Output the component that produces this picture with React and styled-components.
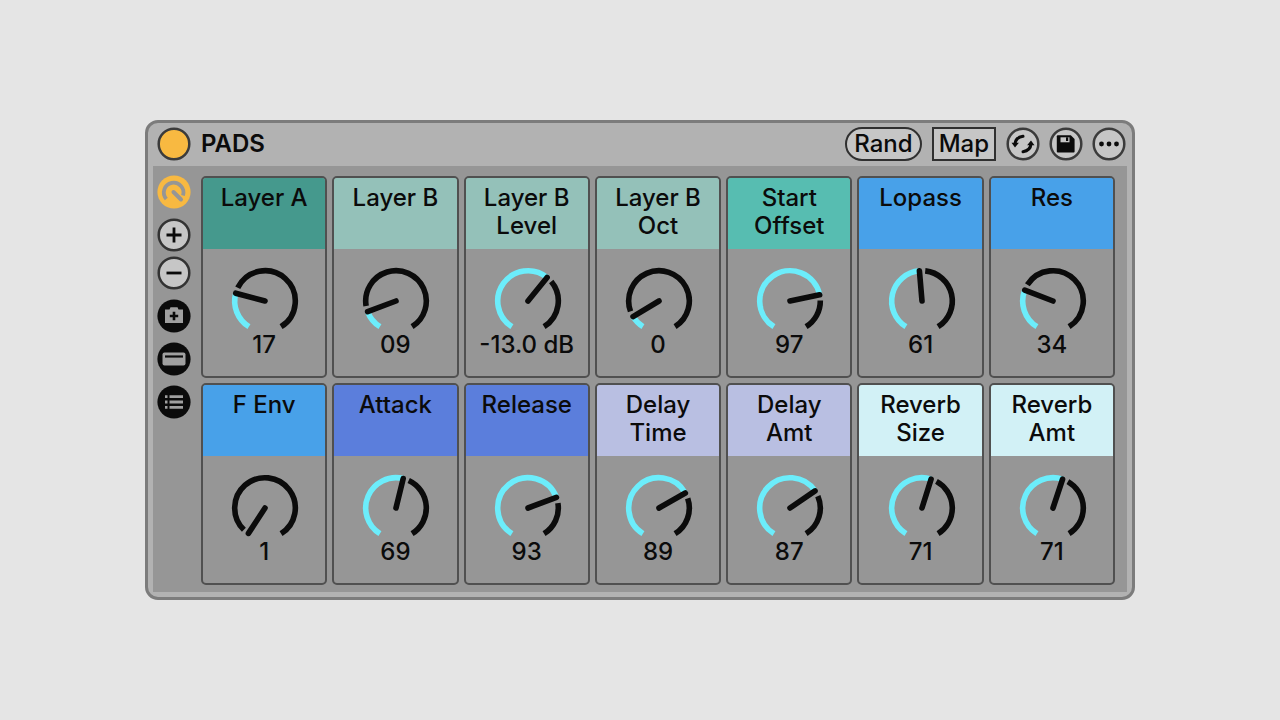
import React, { useState } from "react";
import styled, { createGlobalStyle } from "styled-components";

const GlobalStyle = createGlobalStyle`
    * {
        box-sizing: border-box;
    }

    body {
        margin: 0;
        background-color: #e5e5e5;
        color: #0b0b0b;
        font-family: Inter, "Liberation Sans", sans-serif;
    }
`

const Page = styled.main`
    min-height: 100vh;
    display: flex;
    flex-direction: column;
    align-items: center;
    justify-content: center;
`

const Rack = styled.section`
    width: calc(100% - 290px);
    border: 3px solid #7c7c7c;
    border-radius: 13px;
    background-color: #b2b2b2;
    padding: 0 5px 5px;
`

const Header = styled.header`
    display: flex;
    align-items: center;
    gap: 10px;
    height: 43px;
    padding: 0 1px 1px 4px;
`

const Name = styled.h1`
    flex: 1;
    margin: 0;
    font-size: 24px;
    line-height: 28px;
    font-weight: 600;
`

const TextButton = styled.button`
    height: 34px;
    padding: 0 ${props => props.$round ? "7px" : "5px"};
    border: 2px solid #303030;
    border-radius: ${props => props.$round ? "17px" : "0"};
    background-color: #c6c6c6;
    color: #0b0b0b;
    font: 500 24px/28px Inter, "Liberation Sans", sans-serif;
    cursor: pointer;
`

const IconGroup = styled.div`
    display: flex;
    gap: 9px;
`

const IconButton = styled.button`
    display: flex;
    width: 34px;
    height: 34px;
    padding: 0;
    border: 0;
    border-radius: 50%;
    background: none;
    cursor: pointer;
`

const Body = styled.div`
    display: flex;
    gap: 10px;
    padding: 9px 12px 7px 4px;
    background-color: #969696;
`

const Side = styled.nav`
    display: flex;
    flex-direction: column;
    gap: 9px;
`

const Pair = styled.div`
    display: flex;
    flex-direction: column;
    gap: 4px;
`

const Grid = styled.div`
    flex: 1;
    display: grid;
    grid-template-columns: repeat(7, 1fr);
    gap: 5px;
    padding-top: 1px;
`

const Cell = styled.div`
    display: flex;
    flex-direction: column;
    align-items: center;
    height: 202px;
    border: 2px solid #505050;
    border-radius: 5px;
    overflow: hidden;
`

const Title = styled.label`
    width: 100%;
    height: 71px;
    padding: 6px 16px 0;
    background-color: ${props => props.$color};
    font-size: 24px;
    line-height: 28px;
    font-weight: 500;
    text-align: center;
`

const Dial = styled.div`
    position: relative;
    width: 68px;
    height: 68px;
    margin-top: 18px;
`

const DialInput = styled.input`
    position: absolute;
    inset: 0;
    width: 100%;
    height: 100%;
    margin: 0;
    opacity: 0;
    cursor: pointer;
`

const Value = styled.output`
    margin-top: -4px;
    font-size: 24px;
    line-height: 28px;
    font-weight: 500;
    white-space: nowrap;
`

const midi = { min: 0, max: 127 };
const layer = { min: 0, max: 69, format: v => String(Math.round(v)).padStart(2, "0") };
const level = { min: -36, max: 0.4, format: v => v.toFixed(1) + " dB" };
const octave = { min: -1, max: 10 };

const macros = [
    { name: "Layer A", color: "#45998d", value: 17, ...layer },
    { name: "Layer B", color: "#94c1b9", value: 8.7, ...layer },
    { name: "Layer B Level", color: "#94c1b9", value: -13, ...level },
    { name: "Layer B Oct", color: "#94c1b9", value: 0, ...octave },
    { name: "Start Offset", color: "#57bdb1", value: 97, ...midi },
    { name: "Lopass", color: "#48a1e9", value: 61.4, ...midi },
    { name: "Res", color: "#48a1e9", value: 34, ...midi },
    { name: "F Env", color: "#48a1e9", value: 0.5, ...midi },
    { name: "Attack", color: "#5b7edc", value: 69.4, ...midi },
    { name: "Release", color: "#5b7edc", value: 93.4, ...midi },
    { name: "Delay Time", color: "#b9bfe2", value: 89.4, ...midi },
    { name: "Delay Amt", color: "#b9bfe2", value: 87.4, ...midi },
    { name: "Reverb Size", color: "#d2f1f6", value: 71, ...midi },
    { name: "Reverb Amt", color: "#d2f1f6", value: 71.4, ...midi },
];

const SWEEP = 148;

// angles are in degrees, clockwise from 12 o'clock
const point = (angle, r) => {
    const rad = angle * Math.PI / 180;
    return `${(35 + r * Math.sin(rad)).toFixed(2)} ${(34 - r * Math.cos(rad)).toFixed(2)}`;
};

const arc = (from, to) =>
    `M${point(from, 30.3)}A30.3 30.3 0 ${to - from > 180 ? 1 : 0} 1 ${point(to, 30.3)}`;

const Macro = ({ macro }) => {
    const [value, setValue] = useState(macro.value);
    const id = macro.name.toLowerCase().replace(/ /g, "-");
    const angle = (value - macro.min) / (macro.max - macro.min) * 2 * SWEEP - SWEEP;
    const format = macro.format || (v => String(Math.round(v)));

    return (
        <Cell>
            <Title htmlFor={id} $color={macro.color}>{macro.name}</Title>
            <Dial>
                <svg width="70" height="68" viewBox="0 0 70 68" fill="none" strokeWidth="5.6">
                    {angle > -SWEEP + 5 && <path d={arc(-SWEEP, angle)} stroke="#6cedfb" />}
                    {angle < SWEEP - 11 && <path d={arc(angle + 11, SWEEP)} stroke="#0b0b0b" />}
                    <path d={`M35 34L${point(angle, 30.3)}`} stroke="#0b0b0b" strokeLinecap="round" />
                </svg>
                <DialInput
                    id={id}
                    type="range"
                    min={macro.min}
                    max={macro.max}
                    step="any"
                    value={value}
                    onChange={event => setValue(Number(event.target.value))}/>
            </Dial>
            <Value htmlFor={id}>{format(value)}</Value>
        </Cell>
    );
};

const Icon = ({ children, fill = "#0b0b0b", ring }) => (
    <svg width="34" height="34" viewBox="0 0 34 34" fill="none">
        <circle cx="17" cy="17" r={ring ? 15.3 : 16.6} fill={fill} stroke={ring} strokeWidth="2.5" />
        {children}
    </svg>
);

const App = () => {
    return <>
        <GlobalStyle />
        <Page>
            <Rack>
                <Header>
                    <IconButton type="button" aria-label="Device on">
                        <Icon fill="#f8b941" ring="#3b3b3b" />
                    </IconButton>
                    <Name>PADS</Name>
                    <TextButton type="button" $round>Rand</TextButton>
                    <TextButton type="button">Map</TextButton>
                    <IconGroup>
                        <IconButton type="button" aria-label="Swap">
                            <Icon fill="#c6c6c6" ring="#3b3b3b">
                                <path d="M9 17C9.400 12.500 12.500 10 17 9.300" stroke="#0b0b0b" strokeWidth="3" strokeLinecap="round" />
                                <path d="M5.500 15.800h7.400L9 20.400z" fill="#0b0b0b" />
                                <path d="M25 17C24.600 21.500 21.500 24 17 24.700" stroke="#0b0b0b" strokeWidth="3" strokeLinecap="round" />
                                <path d="M28.500 18.200h-7.400l3.900-4.600z" fill="#0b0b0b" />
                            </Icon>
                        </IconButton>
                        <IconButton type="button" aria-label="Save">
                            <Icon fill="#c6c6c6" ring="#3b3b3b">
                                <path d="M7.800 9.200a1 1 0 0 1 1-1h13l3.800 3.800v12.400a1 1 0 0 1-1 1H8.800a1 1 0 0 1-1-1z" fill="#0b0b0b" />
                                <path d="M11.500 10.300h9v5h-9z" fill="#c6c6c6" />
                                <path d="M17 10.300h2.200v3.700H17z" fill="#0b0b0b" />
                            </Icon>
                        </IconButton>
                        <IconButton type="button" aria-label="More">
                            <Icon fill="#c6c6c6" ring="#3b3b3b">
                                <circle cx="9.500" cy="17" r="2.400" fill="#0b0b0b" />
                                <circle cx="17" cy="17" r="2.400" fill="#0b0b0b" />
                                <circle cx="24.500" cy="17" r="2.400" fill="#0b0b0b" />
                            </Icon>
                        </IconButton>
                    </IconGroup>
                </Header>
                <Body>
                    <Side>
                        <IconButton type="button" aria-label="Show macros">
                            <Icon fill="#f8b941">
                                <path d="M9.300 24A9.800 9.800 0 1 1 26 20.500" stroke="#969696" strokeWidth="3.800" />
                                <path d="M16.500 17L24 24.500" stroke="#969696" strokeWidth="4" strokeLinecap="round" />
                            </Icon>
                        </IconButton>
                        <Pair>
                            <IconButton type="button" aria-label="Add macro">
                                <Icon fill="#c6c6c6" ring="#333">
                                    <path d="M9.500 17h15M17 9.500v15" stroke="#0b0b0b" strokeWidth="2.800" />
                                </Icon>
                            </IconButton>
                            <IconButton type="button" aria-label="Remove macro">
                                <Icon fill="#c6c6c6" ring="#333">
                                    <path d="M9.500 17h15" stroke="#0b0b0b" strokeWidth="2.800" />
                                </Icon>
                            </IconButton>
                        </Pair>
                        <IconButton type="button" aria-label="Variations">
                            <Icon>
                                <path d="M8 10.500h4.500l1-2.300h7l1 2.300H26V24H8z" fill="#a0a0a0" />
                                <path d="M12.800 17h8.400M17 12.800v8.400" stroke="#0b0b0b" strokeWidth="2.600" />
                            </Icon>
                        </IconButton>
                        <IconButton type="button" aria-label="Devices">
                            <Icon>
                                <rect x="5.500" y="10.500" width="23" height="13" rx="2" fill="#a0a0a0" />
                                <path d="M8 14.500h18" stroke="#0b0b0b" strokeWidth="2.200" />
                            </Icon>
                        </IconButton>
                        <IconButton type="button" aria-label="Chain list">
                            <Icon>
                                <path d="M8 11.700h2.500M8 17h2.500M8 22.300h2.500M12.500 11.700h13.500M12.500 17h13.500M12.500 22.300h13.500" stroke="#a0a0a0" strokeWidth="2.800" />
                            </Icon>
                        </IconButton>
                    </Side>
                    <Grid>
                        {macros.map(macro => <Macro key={macro.name} macro={macro} />)}
                    </Grid>
                </Body>
            </Rack>
        </Page>
    </>
}

export default App
